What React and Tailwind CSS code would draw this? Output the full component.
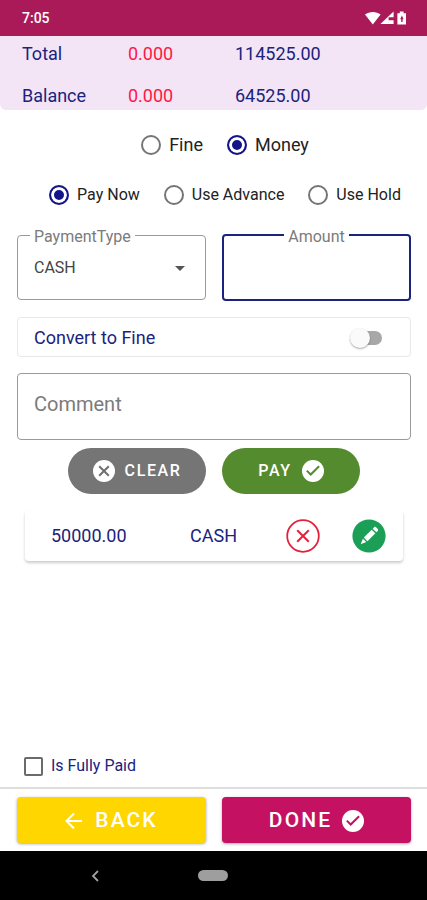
import React from "react";

const totals = [
  { name: "Total", fine: "0.000", money: "114525.00" },
  { name: "Balance", fine: "0.000", money: "64525.00" },
];

const kinds = ["Fine", "Money"];
const modes = ["Pay Now", "Use Advance", "Use Hold"];

const payments = [{ amount: "50000.00", type: "CASH" }];

function CheckIcon({ color }) {
  return (
    <svg viewBox="0 0 22 22" className="size-[22px] shrink-0" aria-hidden="true">
      <circle cx="11" cy="11" r="11" fill="white" />
      <path d="M4.8 10.6l3.9 3.9 8.4-8.2" fill="none" stroke={color} strokeWidth="2" />
    </svg>
  );
}

function ClearIcon() {
  return (
    <svg viewBox="0 0 22 22" className="size-[22px] shrink-0" aria-hidden="true">
      <circle cx="11" cy="11" r="11" fill="white" />
      <path d="M6.2 6.2l9.6 9.6M15.8 6.2l-9.6 9.6" stroke="#6f6f6f" strokeWidth="2" />
    </svg>
  );
}

function StatusBar() {
  return (
    <header className="flex h-9 items-center justify-between bg-[#ab1a58] pr-[18px] pl-[22px] text-white">
      <span className="text-sm font-medium">7:05</span>
      <svg viewBox="0 0 44 16" className="h-4 w-11" fill="white" aria-hidden="true">
        <path d="M0 4.6C4.2 1.2 11.4 1.2 15.6 4.6L7.8 14.4z" />
        <path d="M28.6 1.6v5.6h-5v3h5V14H15.4z" />
        <path d="M32.4 3.2h2.4V1.6h3.8v1.6H41V14.6h-8.6zM35.2 9.2h1V12h1.4V9.2h1L36.9 5.4z" fillRule="evenodd" />
      </svg>
    </header>
  );
}

function Summary() {
  return (
    <section className="rounded-b-md bg-[#f3e5f5] pt-[6px] pb-[2px] pl-[22px]">
      <table className="w-full table-fixed text-left text-lg leading-6 text-[#1a237e]">
        <tbody>
          {totals.map((row, index) => (
            <tr key={row.name}>
              <th className={`w-[106px] font-normal ${index > 0 ? "pt-[18px]" : ""}`}>{row.name}</th>
              <td className={`w-[107px] text-[#ff1744] ${index > 0 ? "pt-[18px]" : ""}`}>{row.fine}</td>
              <td className={index > 0 ? "pt-[18px]" : ""}>{row.money}</td>
            </tr>
          ))}
        </tbody>
      </table>
    </section>
  );
}

function RadioRow({ name, options, selected, className }) {
  return (
    <div className={`flex h-[30px] items-center justify-center gap-6 pl-[22px] text-[#222222] ${className}`}>
      {options.map((option) => (
        <label key={option} className="flex items-center gap-2 whitespace-nowrap">
          <input
            type="radio"
            name={name}
            defaultChecked={option === selected}
            className="size-5 appearance-none rounded-full border-2 border-[#757575] bg-white checked:border-[#14148a] checked:bg-[#14148a] checked:shadow-[inset_0_0_0_3px_white]"
          />
          {option}
        </label>
      ))}
    </div>
  );
}

function Fields() {
  return (
    <div className="mt-3.5 grid grid-cols-2 gap-4">
      <fieldset className="relative h-[76px] min-w-0 rounded border border-[#9a9a9a] px-3">
        <legend className="px-1 pt-1 text-base leading-[18px] text-[#7b7b7b]">
          <label htmlFor="payment-type">PaymentType</label>
        </legend>
        <select
          id="payment-type"
          className="h-11 w-full appearance-none bg-transparent px-1 text-base text-[#444444] outline-none"
        >
          <option>CASH</option>
        </select>
        <svg viewBox="0 0 10 5" className="pointer-events-none absolute top-5 right-5 h-[5px] w-2.5" aria-hidden="true">
          <path d="M0 0h10L5 5z" fill="#555555" />
        </svg>
      </fieldset>
      <fieldset className="h-[77px] min-w-0 rounded border-2 border-[#1a237e] px-3">
        <legend className="mx-auto px-1 pt-1 text-base leading-[18px] text-[#7b7b7b]">
          <label htmlFor="amount">Amount</label>
        </legend>
        <input id="amount" inputMode="decimal" className="h-11 w-full bg-transparent text-center text-lg outline-none" />
      </fieldset>
    </div>
  );
}

function PaymentRow({ payment }) {
  return (
    <div className="mx-2 mt-4 flex h-[51px] items-center rounded bg-white pr-[17px] pl-[26px] text-lg text-[#1a237e] shadow-[0_2px_3px_rgba(0,0,0,0.2)]">
      <span className="w-[139px]">{payment.amount}</span>
      <span className="flex-1">{payment.type}</span>
      <div className="flex gap-8">
        <button type="button" aria-label="Delete">
          <svg viewBox="0 0 34 34" className="size-[34px]" fill="none" stroke="#e5203c" aria-hidden="true">
            <circle cx="17" cy="17" r="15.8" strokeWidth="1.8" />
            <path d="M11.2 11.2l11.6 11.6M22.8 11.2L11.2 22.8" strokeWidth="2" />
          </svg>
        </button>
        <button type="button" aria-label="Edit">
          <svg viewBox="0 0 34 34" className="size-[34px]" aria-hidden="true">
            <circle cx="17" cy="17" r="16.6" fill="#1b9e55" />
            <g fill="white" transform="rotate(45 17 17)">
              <path d="M14.4 7.2c0-.8.6-1.4 1.4-1.4h2.4c.8 0 1.4.6 1.4 1.4v2h-5.2z" />
              <path d="M14.4 10.6h5.2v11.2h-5.2z" />
              <path d="M14.6 23.2h4.8L17 28.8z" />
            </g>
          </svg>
        </button>
      </div>
    </div>
  );
}

function App() {
  return (
    <div className="flex min-h-screen flex-col bg-white font-[Roboto,sans-serif]">
      <StatusBar />
      <Summary />
      <main className="flex flex-1 flex-col pt-5 pr-4 pl-[17px]">
        <RadioRow name="kind" options={kinds} selected="Money" className="text-lg" />
        <RadioRow name="mode" options={modes} selected="Pay Now" className="mt-5 text-base" />
        <Fields />
        <label className="mt-4 flex h-10 items-center justify-between rounded border border-[#e8e8e8] pt-px pr-7 pl-4 text-lg text-[#1a237e]">
          Convert to Fine
          <input
            type="checkbox"
            role="switch"
            className="relative h-3.5 w-7 appearance-none rounded-full bg-[#a8a8a8] before:absolute before:-top-[3px] before:-left-1 before:size-5 before:rounded-full before:bg-[#fafafa] before:shadow-[0_1px_2px_rgba(0,0,0,0.35)] checked:before:left-3"
          />
        </label>
        <input
          aria-label="Comment"
          placeholder="Comment"
          className="mt-4 h-[67px] rounded border border-[#9a9a9a] px-4 pb-1.5 text-xl outline-none placeholder:text-[#7b7b7b]"
        />
        {/* actions */}
        <div className="mt-2 flex justify-center gap-4 text-base font-medium tracking-widest text-white">
          <button type="button" className="flex h-[46px] w-[138px] items-center justify-center gap-2.5 rounded-full bg-[#757575]">
            <ClearIcon />
            CLEAR
          </button>
          <button type="button" className="flex h-[46px] w-[138px] items-center justify-center gap-2.5 rounded-full bg-[#558b2f]">
            PAY
            <CheckIcon color="#558b2f" />
          </button>
        </div>
        {payments.map((payment) => (
          <PaymentRow key={payment.amount} payment={payment} />
        ))}
        <label className="mt-auto mb-[11px] flex items-center gap-2 self-start pl-[7px] text-base leading-5 text-[#1a237e]">
          <input
            type="checkbox"
            className="size-[19px] appearance-none rounded-xs border-2 border-[#6b6b6b] bg-white checked:bg-[#1a237e]"
          />
          Is Fully Paid
        </label>
      </main>
      {/* footer */}
      <footer className="grid grid-cols-2 gap-4 border-t-2 border-[#dddddd] pt-2 pr-4 pb-2 pl-[17px] text-[21px] font-medium tracking-widest text-white">
        <button type="button" className="flex h-[46px] items-center justify-center gap-3 rounded bg-[#ffd600] pt-0.5 shadow-[0_1px_3px_rgba(0,0,0,0.35)]">
          <svg viewBox="0 0 18 18" className="size-[18px]" fill="none" stroke="white" strokeWidth="2" aria-hidden="true">
            <path d="M17 9H2M9 1.5L1.5 9 9 16.5" />
          </svg>
          BACK
        </button>
        <button type="button" className="flex h-[46px] items-center justify-center gap-2.5 rounded bg-[#c51162] pt-0.5 shadow-[0_1px_3px_rgba(0,0,0,0.35)]">
          DONE
          <CheckIcon color="#c51162" />
        </button>
      </footer>
      <nav className="grid h-[49px] grid-cols-9 items-center bg-black">
        <button type="button" aria-label="Back" className="col-start-2 col-end-4 flex justify-center">
          <svg viewBox="0 0 8 12" className="h-3 w-2" fill="none" stroke="#a0a0a0" strokeWidth="1.8" aria-hidden="true">
            <path d="M7 1L2 6l5 5" />
          </svg>
        </button>
        <button type="button" aria-label="Home" className="col-start-5 mx-auto h-[11px] w-[30px] rounded-full bg-[#9e9e9e]"></button>
      </nav>
    </div>
  );
}

export default App;
